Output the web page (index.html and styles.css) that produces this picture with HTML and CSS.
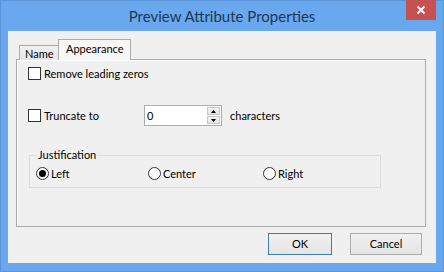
FILE: index.html
```html
<!DOCTYPE html>
<html>
	<head>
		<meta charset="UTF-8">
		<title>Preview Attribute Properties</title>
		<link rel="stylesheet" href="styles.css">
	</head>
	<body>
		<div class="window">
			<div class="titlebar">
				<span class="title">Preview Attribute Properties</span>
				<div class="close">
					<svg width="10" height="10" viewBox="0 0 10 10">
						<path d="M1.5 1.5 L8.5 8.5 M8.5 1.5 L1.5 8.5" stroke="#fff" stroke-width="1.8" fill="none"/>
					</svg>
				</div>
			</div>
			<div class="client">
				<div class="tabs">
					<div class="tab">Name</div>
					<div class="tab active">Appearance</div>
				</div>
				<div class="panel">
					<label class="row">
						<span class="check"></span>
						<span>Remove leading zeros</span>
					</label>
					<div class="row row-truncate">
						<label class="truncate-label">
							<span class="check"></span>
							<span>Truncate to</span>
						</label>
						<div class="spin">
							<span class="spin-value">0</span>
							<div class="spin-btns">
								<div class="spin-btn">
									<svg width="5" height="3" viewBox="0 0 5 3"><path d="M2.5 0 L5 3 L0 3 Z" fill="#000"/></svg>
								</div>
								<div class="spin-btn">
									<svg width="5" height="3" viewBox="0 0 5 3"><path d="M0 0 L5 0 L2.5 3 Z" fill="#000"/></svg>
								</div>
							</div>
						</div>
						<span class="unit">characters</span>
					</div>
					<fieldset class="group">
						<legend>Justification</legend>
						<div class="radios">
							<label class="radio-item"><span class="radio checked"></span>Left</label>
							<label class="radio-item"><span class="radio"></span>Center</label>
							<label class="radio-item"><span class="radio"></span>Right</label>
						</div>
					</fieldset>
				</div>
				<div class="buttons">
					<div class="btn btn-ok">OK</div>
					<div class="btn btn-cancel">Cancel</div>
				</div>
			</div>
		</div>
	</body>
</html>
```
FILE: styles.css
```css
*{
	margin: 0;
	padding: 0;
	box-sizing: border-box;
}
body{
	width: 444px;
	height: 272px;
	overflow: hidden;
	font-family: Lato, "Noto Sans", sans-serif;
	font-size: 11px;
	color: #000;
}
.window{
	width: 444px;
	height: 272px;
	background: #69a8ef;
	border: 1px solid #5a93d6;
	padding: 0 7px 8px 7px;
	display: flex;
	flex-direction: column;
}
.titlebar{
	height: 30px;
	position: relative;
	display: flex;
	align-items: center;
	justify-content: center;
}
.title{
	font-size: 15px;
	color: #1d3652;
	margin-top: -1px;
}
.close{
	position: absolute;
	right: 0;
	top: -1px;
	width: 30px;
	height: 20px;
	background: #c75050;
	display: flex;
	align-items: center;
	justify-content: center;
}
.client{
	flex: 1;
	background: #f0f0f0;
	padding: 8px 10px 0 8px;
	display: flex;
	flex-direction: column;
}
.tabs{
	display: flex;
	align-items: flex-end;
	height: 21px;
	padding-left: 3px;
	margin-bottom: -1px;
	position: relative;
	z-index: 1;
}
.tab{
	height: 15px;
	line-height: 15px;
	padding: 0 5px;
	border: 1px solid #acacac;
	border-bottom: none;
	border-right: none;
	background: linear-gradient(#f0f0f0, #e5e5e5);
	width: 40px;
}
.tab.active{
	height: 21px;
	line-height: 18px;
	width: 73px;
	padding: 0 7px;
	border-right: 1px solid #acacac;
	background: #f7f7f7;
	margin-left: -1px;
}
.panel{
	height: 168px;
	border: 1px solid #acacac;
	box-shadow: inset 1px 1px 0 #fff;
	padding: 5px 0 0 11px;
	display: flex;
	flex-direction: column;
	align-items: flex-start;
}
.row{
	display: flex;
	align-items: center;
	height: 16px;
}
.check{
	width: 13px;
	height: 13px;
	border: 1px solid #333;
	background: #fff;
	margin-right: 3px;
}
.row-truncate{
	margin-top: 24px;
	height: 21px;
}
.truncate-label{
	display: flex;
	align-items: center;
	width: 116px;
}
.spin{
	width: 78px;
	height: 21px;
	border: 1px solid #abadb3;
	background: #fff;
	display: flex;
	align-items: center;
	padding: 0 1px 0 2px;
}
.spin-value{
	flex: 1;
}
.spin-btns{
	display: flex;
	flex-direction: column;
	gap: 1px;
}
.spin-btn{
	width: 13px;
	height: 8px;
	border: 1px solid #c8c8c8;
	background: linear-gradient(#f4f4f4, #e4e4e4);
	display: flex;
	align-items: center;
	justify-content: center;
}
.unit{
	margin-left: 8px;
}
.group{
	margin: 22px 0 0 1px;
	width: 352px;
	border: 1px solid #dcdcdc;
	padding: 0 0 6px 6px;
}
.group legend{
	margin-left: 1px;
	padding: 0 1px;
	line-height: 14px;
}
.radios{
	display: grid;
	grid-template-columns: 112px 115px auto;
	margin-top: 3px;
	height: 16px;
	align-items: center;
}
.radio-item{
	display: flex;
	align-items: center;
}
.radio{
	width: 13px;
	height: 13px;
	border: 1px solid #333;
	border-radius: 50%;
	background: #fff;
	margin-right: 2px;
	display: flex;
	align-items: center;
	justify-content: center;
}
.radio.checked::after{
	content: "";
	width: 7px;
	height: 7px;
	border-radius: 50%;
	background: #000;
}
.buttons{
	display: flex;
	justify-content: flex-end;
	gap: 18px;
	margin-top: 6px;
	padding-right: 4px;
}
.btn{
	height: 22px;
	line-height: 20px;
	text-align: center;
	background: linear-gradient(#f0f0f0, #e5e5e5);
	border: 1px solid #acacac;
}
.btn-ok{
	width: 64px;
	border-color: #3c7fb1;
}
.btn-cancel{
	width: 72px;
}
```
